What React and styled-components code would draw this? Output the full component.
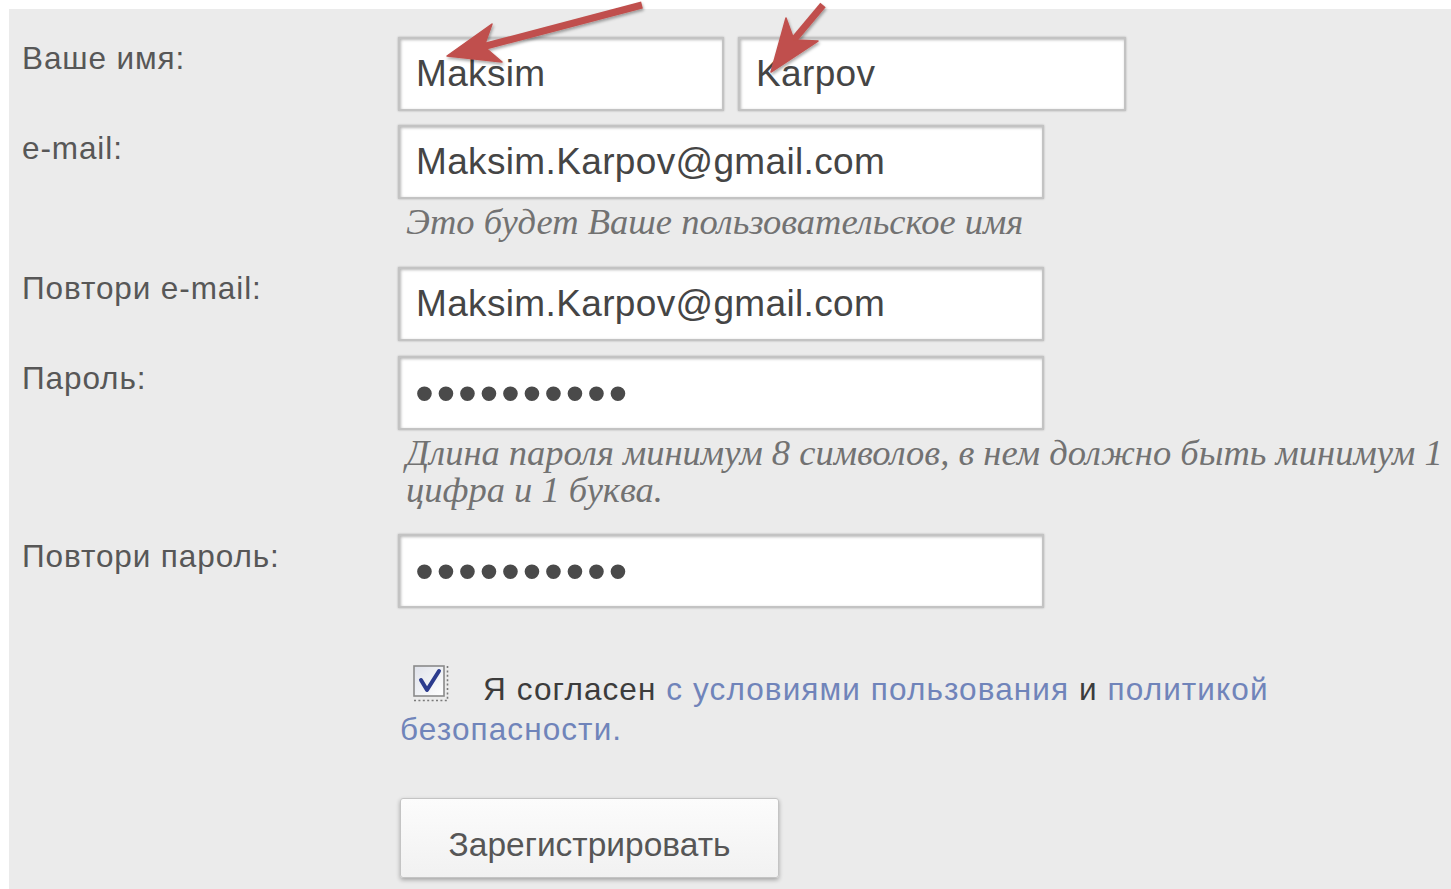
import React from "react";
import styled, { createGlobalStyle } from "styled-components";

const GlobalStyle = createGlobalStyle`
  html, body {
    margin: 0;
    padding: 0;
    background: #ffffff;
    overflow: hidden;
  }
  #root {
    position: relative;
  }
`;

const Panel = styled.div`
  margin: 9px 0 0 9px;
  height: calc(100vh - 9px);
  box-sizing: border-box;
  background: #ebebeb;
  padding: 28px 0 0 13px;
  overflow: hidden;
  font-family: "Liberation Sans", Arial, sans-serif;
`;

const Row = styled.div`
  display: grid;
  grid-template-columns: 376px 1fr;
  margin-bottom: ${(p) => p.$gap ?? 14}px;
`;

const Label = styled.div`
  font-size: 31.5px;
  line-height: 36px;
  letter-spacing: 0.9px;
  color: #575757;
  padding-top: ${(p) => p.$offset || 0}px;
`;

const Fields = styled.div`
  display: flex;
  gap: 14px;
`;

const Field = styled.div`
  display: flex;
  flex-direction: column;
`;

const TextInput = styled.input`
  box-sizing: border-box;
  width: ${(p) => p.$width}px;
  height: 74px;
  padding: 0 0 0 16px;
  margin: 0;
  background: #ffffff;
  border: 2px solid #c3c3c3;
  border-radius: 0;
  box-shadow: inset 1px 1px 3px rgba(0, 0, 0, 0.28), 0 0 2px rgba(0, 0, 0, 0.25);
  font-family: "Liberation Sans", Arial, sans-serif;
  font-size: 37px;
  letter-spacing: 0.35px;
  color: #454545;
  outline: none;
`;

const PasswordInput = styled(TextInput)`
  font-size: 54px;
  letter-spacing: 2.6px;
  color: #4a4a4a;
  padding-left: 15px;
`;

const Hint = styled.div`
  margin: 4px 0 ${(p) => p.$after ?? 13}px 8px;
  font-family: "Liberation Serif", "Times New Roman", serif;
  font-style: italic;
  font-size: 36.5px;
  line-height: 37px;
  color: #727272;
  white-space: nowrap;
`;

const Agreement = styled.div`
  margin: 61px 0 0 376px;
  max-width: 905px;
  font-size: 31.5px;
  line-height: 40px;
  letter-spacing: 1.1px;
  color: #3c3c3c;
  padding-left: 2px;
`;

const Plain = styled.span`
  color: #3c3c3c;
`;

const CheckMark = styled.span`
  display: inline-block;
  width: 40px;
  height: 40px;
  margin: -13px 33px 0 10px;
  vertical-align: -3px;

  svg {
    display: block;
  }
`;

const Link = styled.a`
  color: #7084ba;
  text-decoration: none;
`;

const Submit = styled.button`
  display: block;
  margin: 49px 0 0 378px;
  width: 379px;
  height: 80px;
  padding: 14px 0 0;
  box-sizing: border-box;
  border: 1px solid #c4c4c4;
  border-radius: 3px;
  background: linear-gradient(#fcfcfc, #f1f1f1);
  box-shadow: 0 2px 4px rgba(0, 0, 0, 0.3);
  font-family: "Liberation Sans", Arial, sans-serif;
  font-size: 33.5px;
  color: #565656;
`;

const ArrowLayer = styled.svg`
  position: absolute;
  top: 0;
  left: 0;
  pointer-events: none;
  overflow: visible;
`;

function Checkbox() {
  return (
    <CheckMark>
      <svg width="40" height="40" viewBox="0 0 40 40">
        <defs>
          <linearGradient id="boxFill" x1="0" y1="0" x2="1" y2="1">
            <stop offset="0" stopColor="#dfe2ea" />
            <stop offset="1" stopColor="#ffffff" />
          </linearGradient>
        </defs>
        <rect x="4" y="3" width="30" height="30" fill="url(#boxFill)" stroke="#8a8a8a" strokeWidth="1.6" />
        <path d="M37.5 3 V37.5 H4" fill="none" stroke="#7a7a7a" strokeWidth="1.6" strokeDasharray="2 2.4" />
        <path d="M11 17 L17 27 L29 8" fill="none" stroke="#2c3c8e" strokeWidth="4" strokeLinecap="round" strokeLinejoin="round" />
      </svg>
    </CheckMark>
  );
}

function Arrows() {
  return (
    <ArrowLayer width="1451" height="120" viewBox="0 0 1451 120">
      <defs>
        <filter id="arrowShadow" x="-20%" y="-20%" width="140%" height="160%">
          <feDropShadow dx="1" dy="2" stdDeviation="1.5" floodColor="#000" floodOpacity="0.35" />
        </filter>
      </defs>
      <g fill="#c0504d" stroke="#c0504d" filter="url(#arrowShadow)">
        <line x1="642" y1="-4" x2="482" y2="38" strokeWidth="7" />
        <polygon points="447,47 492,15 484,37.5 502,53" strokeWidth="1.5" strokeLinejoin="round" />
        <line x1="823" y1="-4" x2="792" y2="33" strokeWidth="7" />
        <polygon points="771,63 786,9 794,31 818,32" strokeWidth="1.5" strokeLinejoin="round" />
      </g>
    </ArrowLayer>
  );
}

export default function App() {
  return (
    <>
      <GlobalStyle />
      <Panel>
        <Row>
          <Label $offset={3}>Ваше имя:</Label>
          <Fields>
            <TextInput $width={326} readOnly value="Maksim" />
            <TextInput $width={388} readOnly value="Karpov" />
          </Fields>
        </Row>
        <Row>
          <Label $offset={5}>e-mail:</Label>
          <Field>
            <TextInput $width={646} readOnly value="Maksim.Karpov@gmail.com" />
            <Hint>Это будет Ваше пользовательское имя</Hint>
          </Field>
        </Row>
        <Row $gap={15}>
          <Label $offset={3}>Повтори e-mail:</Label>
          <Field>
            <TextInput $width={646} readOnly value="Maksim.Karpov@gmail.com" />
          </Field>
        </Row>
        <Row>
          <Label $offset={4}>Пароль:</Label>
          <Field>
            <PasswordInput $width={646} type="password" readOnly value="1234567890" />
            <Hint $after={12}>
              Длина пароля минимум 8 символов, в нем должно быть минимум 1
              <br />
              цифра и 1 буква.
            </Hint>
          </Field>
        </Row>
        <Row>
          <Label $offset={4}>Повтори пароль:</Label>
          <Field>
            <PasswordInput $width={646} type="password" readOnly value="1234567890" />
          </Field>
        </Row>
        <Agreement>
          <Checkbox />
          <Plain>{"Я согласен "}</Plain>
          <Link href="#terms">с условиями пользования</Link>
          <Plain>{" и "}</Plain>
          <Link href="#privacy">политикой безопасности.</Link>
        </Agreement>
        <Submit type="button">Зарегистрировать</Submit>
      </Panel>
      <Arrows />
    </>
  );
}
